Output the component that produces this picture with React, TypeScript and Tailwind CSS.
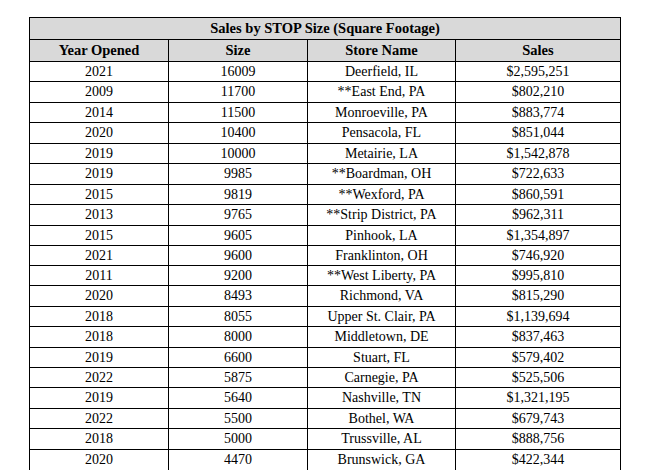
type Row = {
  year: string;
  size: string;
  store: string;
  sales: string;
  h: string;
};

const rows: Row[] = [
  { year: '2021', size: '16009', store: 'Deerfield, IL', sales: '$2,595,251', h: 'h-[20px]' },
  { year: '2009', size: '11700', store: '**East End, PA', sales: '$802,210', h: 'h-[21px]' },
  { year: '2014', size: '11500', store: 'Monroeville, PA', sales: '$883,774', h: 'h-[20px]' },
  { year: '2020', size: '10400', store: 'Pensacola, FL', sales: '$851,044', h: 'h-[21px]' },
  { year: '2019', size: '10000', store: 'Metairie, LA', sales: '$1,542,878', h: 'h-[20px]' },
  { year: '2019', size: '9985', store: '**Boardman, OH', sales: '$722,633', h: 'h-[21px]' },
  { year: '2015', size: '9819', store: '**Wexford, PA', sales: '$860,591', h: 'h-[20px]' },
  { year: '2013', size: '9765', store: '**Strip District, PA', sales: '$962,311', h: 'h-[21px]' },
  { year: '2015', size: '9605', store: 'Pinhook, LA', sales: '$1,354,897', h: 'h-[20px]' },
  { year: '2021', size: '9600', store: 'Franklinton, OH', sales: '$746,920', h: 'h-[20px]' },
  { year: '2011', size: '9200', store: '**West Liberty, PA', sales: '$995,810', h: 'h-[20px]' },
  { year: '2020', size: '8493', store: 'Richmond, VA', sales: '$815,290', h: 'h-[21px]' },
  { year: '2018', size: '8055', store: 'Upper St. Clair, PA', sales: '$1,139,694', h: 'h-[20px]' },
  { year: '2018', size: '8000', store: 'Middletown, DE', sales: '$837,463', h: 'h-[21px]' },
  { year: '2019', size: '6600', store: 'Stuart, FL', sales: '$579,402', h: 'h-[20px]' },
  { year: '2022', size: '5875', store: 'Carnegie, PA', sales: '$525,506', h: 'h-[20px]' },
  { year: '2019', size: '5640', store: 'Nashville, TN', sales: '$1,321,195', h: 'h-[21px]' },
  { year: '2022', size: '5500', store: 'Bothel, WA', sales: '$679,743', h: 'h-[20px]' },
  { year: '2018', size: '5000', store: 'Trussville, AL', sales: '$888,756', h: 'h-[21px]' },
  { year: '2020', size: '4470', store: 'Brunswick, GA', sales: '$422,344', h: 'h-[20px]' },
];

const cell = 'flex items-center justify-center border-r border-black';

export default function App() {
  return (
    <div className="w-[650px] h-[470px] bg-white font-['Liberation_Serif',serif] text-black overflow-hidden">
      <div className="ml-[29px] mt-[17px] w-[592px] border border-black">
        <div className="h-[22px] bg-[#d9d9d9] border-b border-black flex items-center justify-center text-[14.5px] font-bold leading-none">
          Sales by STOP Size (Square Footage)
        </div>
        <div className="h-[22px] bg-[#d9d9d9] border-b border-black flex text-[14.5px] font-bold leading-none">
          <div className={`${cell} w-[139px]`}>Year Opened</div>
          <div className={`${cell} w-[139px]`}>Size</div>
          <div className={`${cell} w-[148px]`}>Store Name</div>
          <div className="flex items-center justify-center flex-1">Sales</div>
        </div>
        {rows.map((r, i) => (
          <div
            key={i}
            className={`${r.h} flex text-[14px] leading-none ${i < rows.length - 1 ? 'border-b border-black' : ''}`}
          >
            <div className={`${cell} w-[139px]`}>{r.year}</div>
            <div className={`${cell} w-[139px]`}>{r.size}</div>
            <div className={`${cell} w-[148px]`}>{r.store}</div>
            <div className="flex items-center justify-center flex-1">{r.sales}</div>
          </div>
        ))}
      </div>
    </div>
  );
}
